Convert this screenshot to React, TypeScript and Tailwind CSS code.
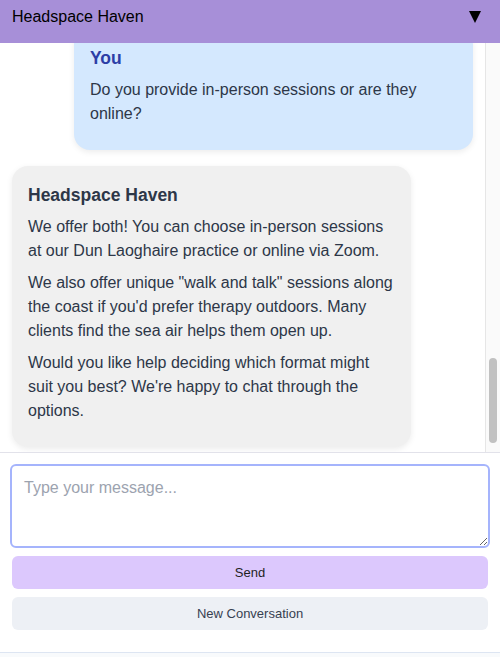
import { useEffect, useRef } from "react";

type Msg = { from: "user" | "bot"; paras: string[] };

const messages: Msg[] = [
  { from: "bot", paras: ["Hello and welcome to Headspace Haven. How can we help you today?"] },
  { from: "user", paras: ["Hi, I'm looking for some support with anxiety. Do you work with that?"] },
  {
    from: "bot",
    paras: [
      "Yes, absolutely. Anxiety is one of the most common things our therapists help with.",
      "We use a range of approaches including CBT, mindfulness-based therapy and person-centred counselling, tailored to what suits you.",
      "Would you like to know more about how a first session works?",
    ],
  },
  { from: "user", paras: ["Yes please. How long is a session and how much does it cost?"] },
  {
    from: "bot",
    paras: [
      "Sessions last 50 minutes. Your first session is an initial consultation where you can get to know your therapist and talk about what you'd like to work on.",
      "Standard sessions are €70, and we offer a reduced rate for students and those on a low income.",
      "Is there anything else you'd like to know?",
    ],
  },
  { from: "user", paras: ["Do you provide in-person sessions or are they online?"] },
  {
    from: "bot",
    paras: [
      "We offer both! You can choose in-person sessions at our Dun Laoghaire practice or online via Zoom.",
      "We also offer unique \"walk and talk\" sessions along the coast if you'd prefer therapy outdoors. Many clients find the sea air helps them open up.",
      "Would you like help deciding which format might suit you best? We're happy to chat through the options.",
    ],
  },
];

function Bubble({ msg }: { msg: Msg }) {
  const isUser = msg.from === "user";
  return (
    <div className={isUser ? "flex justify-end" : "flex justify-start"}>
      <div
        className={
          isUser
            ? "w-[399px] rounded-2xl bg-[#d4e8fe] px-4 pt-[17px] pb-4 shadow-[0_2px_6px_rgba(0,0,0,0.08)]"
            : "w-[399px] rounded-2xl bg-[#f0f0f0] px-4 pt-[17px] pb-4 shadow-[0_2px_6px_rgba(0,0,0,0.08)]"
        }
      >
        <div
          className={
            isUser
              ? "text-[17.5px] font-bold leading-6 text-[#2c3ea6]"
              : "text-[17.5px] font-bold leading-6 text-[#2d3748]"
          }
        >
          {isUser ? "You" : "Headspace Haven"}
        </div>
        {msg.paras.map((p, i) => (
          <p key={i} className="my-2 text-base leading-6 text-[#2d3748]">
            {p}
          </p>
        ))}
      </div>
    </div>
  );
}

export default function App() {
  const listRef = useRef<HTMLDivElement>(null);

  useEffect(() => {
    if (listRef.current) listRef.current.scrollTop = listRef.current.scrollHeight;
  }, []);

  return (
    <div className="flex h-[657px] w-[500px] flex-col bg-white font-['Liberation_Sans',Arial,sans-serif]">
      <div className="flex h-[43px] shrink-0 items-start justify-between bg-[#a78fd8] px-3 pt-[5px]">
        <span className="text-base leading-6 text-black">Headspace Haven</span>
        <svg viewBox="0 0 12 12" className="mt-[6px] mr-[7px] h-3 w-3">
          <polygon points="0,0 12,0 6,12" fill="#000" />
        </svg>
      </div>

      <div className="flex min-h-0 flex-1">
        <div
          ref={listRef}
          className="flex min-w-0 flex-1 flex-col gap-4 overflow-y-auto pt-4 pb-[5px] pl-3 pr-3 [scrollbar-width:none]"
        >
          {messages.map((m, i) => (
            <Bubble key={i} msg={m} />
          ))}
        </div>
        <div className="flex w-[15px] shrink-0 flex-col justify-end border-l border-[#e6e6e6] bg-[#fafafa] pb-[9px] pl-[3px]">
          <div className="h-[85px] w-[8px] rounded-full bg-[#c1c1c1]" />
        </div>
      </div>

      <div className="flex shrink-0 flex-col gap-2 border-t border-[#e2e2ea] px-3 pt-[11px] pb-[22px]">
        <textarea
          autoFocus
          placeholder="Type your message..."
          className="-mx-[2px] h-[84px] rounded-md border-2 border-[#a5b4fc] px-3 py-[10px] text-base leading-6 text-[#2d3748] outline-none placeholder:text-[#9ca3af]"
        />
        <button className="h-[33px] rounded-md bg-[#dcc8fd] text-[13px] text-[#1f1f1f]">Send</button>
        <button className="h-[33px] rounded-md bg-[#edf0f5] text-[13px] text-[#374151]">New Conversation</button>
      </div>
      <div className="h-[5px] shrink-0 border-t border-[#dde5f2] bg-[#f8fafc]" />
    </div>
  );
}
